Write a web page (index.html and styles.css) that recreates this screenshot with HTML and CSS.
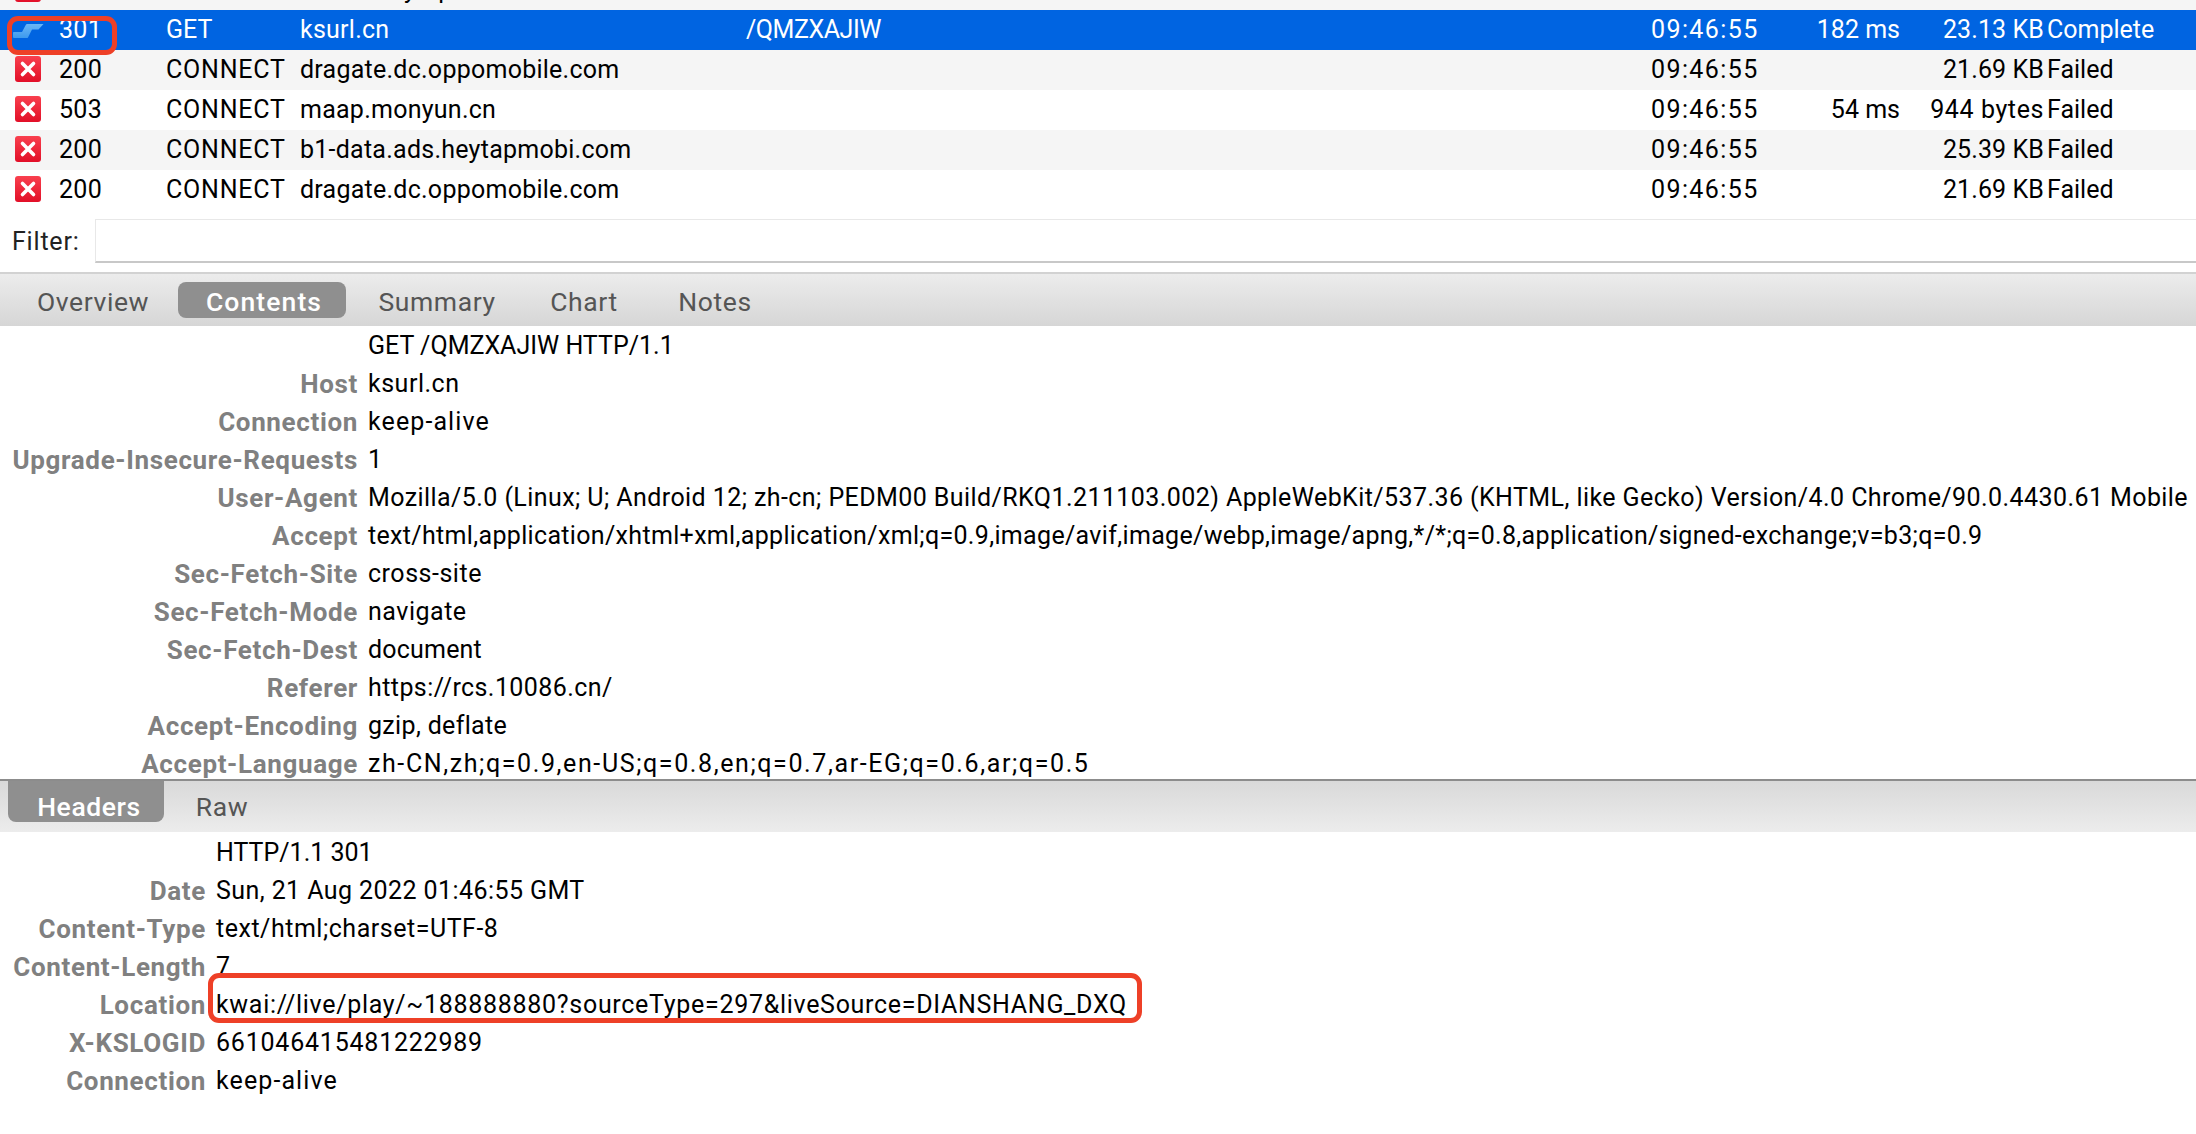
FILE: index.html
```html
<!DOCTYPE html>
<html lang="en">
<head>
<meta charset="utf-8">
<title>Charles session</title>
<link rel="stylesheet" href="styles.css">
</head>
<body>
<div class="app">
  <section class="list">
    <div class="row alt clipped">
      <span class="cell icon"><svg class="err" viewBox="0 0 26 26"><use href="#x"/></svg></span>
      <span class="cell code"></span><span class="cell method"></span>
      <span class="cell host">st.ads.heytapmobi.com</span>
    </div>
    <div class="row selected">
      <span class="cell icon"><svg class="redir" viewBox="0 0 31 16"><path d="M0 9.5Q0 9 1 9H9L13 1.5Q13.3 1 14 1H30.5L25.5 6.5H19L15 14.5Q14.7 15 14 15H1Q0 15 0 14Z" fill="url(#bluegrad)"/></svg></span>
      <span class="cell code">301</span><span class="cell method get">GET</span><span class="cell host">ksurl.cn</span>
      <span class="cell path">/QMZXAJIW</span><span class="cell time">09:46:55</span><span class="cell dur">182 ms</span><span class="cell size">23.13 KB</span><span class="cell state">Complete</span>
    </div>
    <div class="row alt">
      <span class="cell icon"><svg class="err" viewBox="0 0 26 26"><use href="#x"/></svg></span>
      <span class="cell code">200</span><span class="cell method">CONNECT</span><span class="cell host">dragate.dc.oppomobile.com</span>
      <span class="cell path"></span><span class="cell time">09:46:55</span><span class="cell dur"></span><span class="cell size">21.69 KB</span><span class="cell state">Failed</span>
    </div>
    <div class="row">
      <span class="cell icon"><svg class="err" viewBox="0 0 26 26"><use href="#x"/></svg></span>
      <span class="cell code">503</span><span class="cell method">CONNECT</span><span class="cell host">maap.monyun.cn</span>
      <span class="cell path"></span><span class="cell time">09:46:55</span><span class="cell dur">54 ms</span><span class="cell size wide">944 bytes</span><span class="cell state">Failed</span>
    </div>
    <div class="row alt">
      <span class="cell icon"><svg class="err" viewBox="0 0 26 26"><use href="#x"/></svg></span>
      <span class="cell code">200</span><span class="cell method">CONNECT</span><span class="cell host">b1-data.ads.heytapmobi.com</span>
      <span class="cell path"></span><span class="cell time">09:46:55</span><span class="cell dur"></span><span class="cell size">25.39 KB</span><span class="cell state">Failed</span>
    </div>
    <div class="row">
      <span class="cell icon"><svg class="err" viewBox="0 0 26 26"><use href="#x"/></svg></span>
      <span class="cell code">200</span><span class="cell method">CONNECT</span><span class="cell host">dragate.dc.oppomobile.com</span>
      <span class="cell path"></span><span class="cell time">09:46:55</span><span class="cell dur"></span><span class="cell size">21.69 KB</span><span class="cell state">Failed</span>
    </div>
  </section>

  <div class="filter">
    <label class="filter-label">Filter:</label>
    <div class="filter-input"></div>
  </div>

  <nav class="tabs main-tabs">
    <span class="tab">Overview</span>
    <span class="tab active">Contents</span>
    <span class="tab">Summary</span>
    <span class="tab">Chart</span>
    <span class="tab">Notes</span>
  </nav>

  <section class="headers request">
    <div class="hrow"><span class="hname"></span><span class="hval ls0">GET /QMZXAJIW HTTP/1.1</span></div>
    <div class="hrow"><span class="hname">Host</span><span class="hval ls5">ksurl.cn</span></div>
    <div class="hrow"><span class="hname">Connection</span><span class="hval ls11">keep-alive</span></div>
    <div class="hrow"><span class="hname">Upgrade-Insecure-Requests</span><span class="hval ls0">1</span></div>
    <div class="hrow"><span class="hname">User-Agent</span><span class="hval ls4">Mozilla/5.0 (Linux; U; Android 12; zh-cn; PEDM00 Build/RKQ1.211103.002) AppleWebKit/537.36 (KHTML, like Gecko) Version/4.0 Chrome/90.0.4430.61 Mobile</span></div>
    <div class="hrow"><span class="hname">Accept</span><span class="hval ls3">text/html,application/xhtml+xml,application/xml;q=0.9,image/avif,image/webp,image/apng,*/*;q=0.8,application/signed-exchange;v=b3;q=0.9</span></div>
    <div class="hrow"><span class="hname">Sec-Fetch-Site</span><span class="hval ls5">cross-site</span></div>
    <div class="hrow"><span class="hname">Sec-Fetch-Mode</span><span class="hval ls5">navigate</span></div>
    <div class="hrow"><span class="hname">Sec-Fetch-Dest</span><span class="hval ls2">document</span></div>
    <div class="hrow"><span class="hname">Referer</span><span class="hval ls4">https://rcs.10086.cn/</span></div>
    <div class="hrow"><span class="hname">Accept-Encoding</span><span class="hval ls3">gzip, deflate</span></div>
    <div class="hrow"><span class="hname">Accept-Language</span><span class="hval ls16">zh-CN,zh;q=0.9,en-US;q=0.8,en;q=0.7,ar-EG;q=0.6,ar;q=0.5</span></div>
  </section>

  <nav class="tabs sub-tabs">
    <span class="tab active">Headers</span>
    <span class="tab">Raw</span>
  </nav>

  <section class="headers response">
    <div class="hrow"><span class="hname"></span><span class="hval ls0">HTTP/1.1 301</span></div>
    <div class="hrow"><span class="hname">Date</span><span class="hval ls4">Sun, 21 Aug 2022 01:46:55 GMT</span></div>
    <div class="hrow"><span class="hname">Content-Type</span><span class="hval ls5">text/html;charset=UTF-8</span></div>
    <div class="hrow"><span class="hname">Content-Length</span><span class="hval ls0">7</span></div>
    <div class="hrow"><span class="hname">Location</span><span class="hval ls7">kwai://live/play/~188888880?sourceType=297&amp;liveSource=DIANSHANG_DXQ</span></div>
    <div class="hrow"><span class="hname">X-KSLOGID</span><span class="hval ls8">661046415481222989</span></div>
    <div class="hrow"><span class="hname">Connection</span><span class="hval ls11">keep-alive</span></div>
  </section>

  <div class="mark mark-status"></div>
  <div class="mark mark-location"></div>
</div>

<svg class="defs" aria-hidden="true">
  <defs>
    <linearGradient id="redgrad" x1="0" y1="0" x2="0" y2="1">
      <stop offset="0" stop-color="#f9404e"/>
      <stop offset="1" stop-color="#e20f28"/>
    </linearGradient>
    <linearGradient id="bluegrad" x1="0" y1="0" x2="0" y2="1">
      <stop offset="0" stop-color="#6bb7f6"/>
      <stop offset="1" stop-color="#3d9aee"/>
    </linearGradient>
    <g id="x">
      <rect width="26" height="26" rx="3" fill="url(#redgrad)"/>
      <path d="M7.5 7.5L18.5 18.5M18.5 7.5L7.5 18.5" stroke="#fff" stroke-width="3.6" stroke-linecap="round"/>
    </g>
  </defs>
</svg>
</body>
</html>
```

FILE: styles.css
```css
* { box-sizing: border-box; }
html, body { margin: 0; padding: 0; background: #fff; }
body { width: 2196px; height: 1134px; overflow: hidden; }
.app {
  position: relative;
  width: 2196px;
  height: 1134px;
  overflow: hidden;
  font-family: Roboto, "Liberation Sans", sans-serif;
  font-size: 25px;
  color: #000;
}
.defs { position: absolute; width: 0; height: 0; }

.row {
  display: grid;
  grid-template-columns: 59px 107px 134px 446px 905px 142px 107px 147px 1fr;
  align-items: center;
  height: 40px;
  white-space: nowrap;
  background: #fff;
}
.row.alt { background: #f5f5f5; }
.row.clipped { height: 10px; align-items: start; overflow: hidden; }
.row.clipped .cell { height: 40px; line-height: 40px; margin-top: -30px; }
.row.selected { background: #0064e1; color: #fff; }
.cell { display: block; min-width: 0; padding-bottom: 1px; }
.icon { display: flex; align-items: center; padding-bottom: 0; }
.err { width: 26px; height: 26px; margin-left: 15px; margin-top: -2px; display: block; }
.redir { width: 31px; height: 16px; margin-left: 13px; margin-top: 1px; display: block; }
.code { letter-spacing: 0.3px; }
.method { letter-spacing: 0.8px; }
.method.get { letter-spacing: 0; }
.host { letter-spacing: 0.25px; }
.path { letter-spacing: -0.45px; }
.time { letter-spacing: 1.4px; }
.dur, .size { text-align: right; }
.size { padding-right: 3px; letter-spacing: 0.1px; }
.size.wide { letter-spacing: 0.6px; }

.filter {
  display: flex;
  align-items: center;
  height: 44px;
  margin-top: 9px;
}
.filter-label { width: 95px; padding-left: 12px; color: #222; letter-spacing: 0.8px; }
.filter-input {
  flex: 1;
  height: 44px;
  background: #fff;
  border-top: 1px solid #e8e8e8;
  border-left: 1px solid #e8e8e8;
  border-bottom: 2px solid #c8c8c8;
}

.tabs {
  display: flex;
  color: #555;
  white-space: nowrap;
  font-size: 26.5px;
  letter-spacing: 0.6px;
}
.tab {
  display: flex;
  align-items: center;
  justify-content: center;
  border-radius: 8px;
}
.tab.active { background: #8f8f8f; color: #fff; font-weight: 500; letter-spacing: 1.1px; }

.main-tabs {
  height: 54px;
  margin-top: 9px;
  padding: 8px 0 8px 8px;
  border-top: 2px solid #d2d2d2;
  background: linear-gradient(#ececec, #d6d6d6);
}
.main-tabs .tab { height: 36px; padding-top: 2px; }
.main-tabs .tab:nth-child(1) { width: 170px; }
.main-tabs .tab:nth-child(2) { width: 168px; padding-left: 4px; }
.main-tabs .tab:nth-child(3) { width: 182px; }
.main-tabs .tab:nth-child(4) { width: 112px; }
.main-tabs .tab:nth-child(5) { width: 150px; }

.headers { line-height: 38px; white-space: nowrap; overflow: hidden; }
.hrow { display: flex; height: 38px; }
.hname {
  flex: none;
  text-align: right;
  color: #808080;
  font-weight: 700;
  font-size: 26px;
  letter-spacing: 0.65px;
}
.hval { margin-left: 10px; }
.ls0 { letter-spacing: 0; }
.ls2 { letter-spacing: 0.2px; }
.ls3 { letter-spacing: 0.33px; }
.ls4 { letter-spacing: 0.42px; }
.ls5 { letter-spacing: 0.52px; }
.ls7 { letter-spacing: 0.7px; }
.ls8 { letter-spacing: 0.78px; }
.ls11 { letter-spacing: 1.1px; }
.ls16 { letter-spacing: 1.6px; }
.request { height: 453px; padding-top: 1px; }
.request .hname { width: 358px; }
.response { padding-top: 2px; }
.response .hname { width: 206px; }

.sub-tabs {
  height: 53px;
  border-top: 2px solid #8c8c8c;
  padding-left: 8px;
  background: linear-gradient(#d9d9d9, #ececec);
}
.sub-tabs .tab { height: 41px; padding-top: 9px; }
.sub-tabs .tab:nth-child(1) { width: 156px; padding-left: 6px; border-radius: 0 0 8px 8px; letter-spacing: 0.6px; }
.sub-tabs .tab:nth-child(2) { width: 116px; }

.mark {
  position: absolute;
  border: 5px solid #ee4027;
  border-radius: 11px;
}
.mark-status { left: 7px; top: 16px; width: 110px; height: 39px; }
.mark-location { left: 208px; top: 973px; width: 934px; height: 50px; }
```
